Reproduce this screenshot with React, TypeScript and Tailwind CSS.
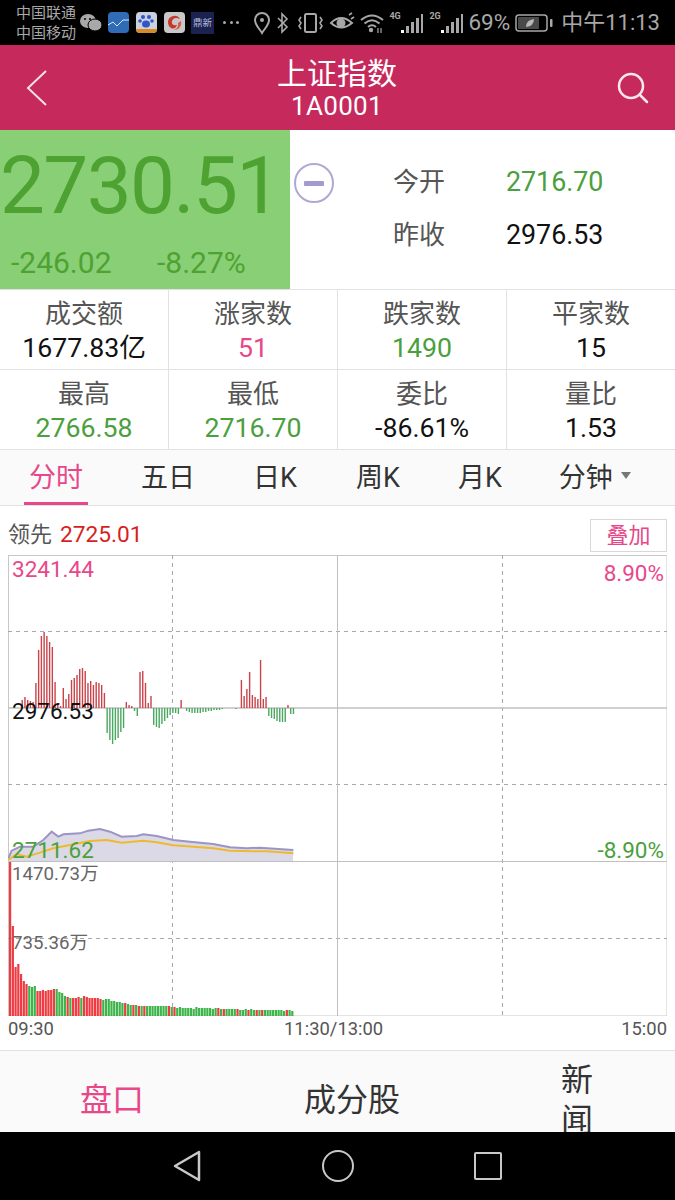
const font = { fontFamily: '"Roboto", "Noto Sans CJK SC", sans-serif' };

const priceBars = [
  8, 11, 8, 7, 6, 25, 58, 72, 76, 72, 66, 61, 26, 5, 2, 20, 9, 14, 28, 30, 33, 39, 40, 37, 25, 27, 23, 26, 25, 23, 15,
  -25, -32, -36, -32, -30, -24, -20, 6, 3, 2, -3, -8, 36, 37, 25, 5, 12, -17, -19, -20, -16, -13, -10, -7, -5, -5, -6, 8,
  0, -3, -4, -5, -5, -5, -5, -4, -4, -3, -3, -2, -2, -2, -1, 0, 0, 0, 0, -1, 0, 28, 12, 19, 36, 13, 11, 9, 48, 9, 11,
  -8, -10, -11, -13, -14, -14, -14, 3, -6, -6,
];

const volBars: [number, string][] = [
  [154, 'r'], [90, 'r'], [49, 'r'], [52, 'r'], [42, 'r'], [35, 'r'], [32, 'r'], [30, 'g'], [29, 'g'], [30, 'g'],
  [25, 'r'], [25, 'r'], [26, 'r'], [25, 'r'], [26, 'r'], [26, 'r'], [27, 'r'], [27, 'g'], [24, 'g'], [23, 'g'],
  [20, 'g'], [19, 'r'], [18, 'g'], [18, 'r'], [18, 'r'], [19, 'r'], [18, 'g'], [20, 'r'], [19, 'r'], [18, 'r'],
  [18, 'r'], [18, 'r'], [18, 'r'], [17, 'r'], [16, 'g'], [17, 'g'], [17, 'g'], [15, 'g'], [15, 'g'], [14, 'g'],
  [14, 'g'], [13, 'g'], [13, 'r'], [12, 'g'], [11, 'g'], [11, 'r'], [11, 'g'], [10, 'r'], [10, 'g'], [10, 'r'],
  [10, 'g'], [10, 'g'], [10, 'g'], [10, 'g'], [10, 'g'], [10, 'g'], [10, 'g'], [10, 'g'], [10, 'r'], [9, 'g'],
  [9, 'r'], [8, 'g'], [9, 'g'], [8, 'g'], [8, 'g'], [8, 'g'], [8, 'g'], [7, 'g'], [9, 'g'], [8, 'g'],
  [8, 'g'], [8, 'g'], [8, 'g'], [8, 'g'], [7, 'g'], [8, 'g'], [8, 'r'], [7, 'g'], [7, 'r'], [7, 'g'],
  [7, 'g'], [7, 'g'], [7, 'g'], [7, 'r'], [6, 'g'], [6, 'g'], [7, 'g'], [6, 'r'],
  [7, 'g'], [6, 'g'], [6, 'r'], [6, 'g'], [6, 'r'], [6, 'g'], [6, 'g'], [6, 'g'], [6, 'g'],
  [6, 'g'], [6, 'g'], [6, 'g'], [5, 'g'], [6, 'r'], [6, 'g'], [5, 'g'],
];

const purpleLine = [
  [25, 145], [35, 122], [60, 110], [100, 110], [130, 90], [155, 65], [175, 80], [190, 73], [240, 70], [265, 62],
  [300, 57], [330, 65], [365, 80], [410, 78], [430, 73], [470, 78], [520, 90], [570, 95], [640, 102], [690, 112],
  [740, 115], [780, 113], [880, 120],
];
const yellowLine = [
  [25, 150], [50, 132], [80, 140], [120, 128], [160, 115], [210, 105], [270, 93], [320, 90], [365, 98], [430, 92],
  [470, 97], [520, 106], [580, 110], [640, 115], [690, 122], [760, 124], [800, 124], [880, 130],
];

// points were read off a 3x crop starting at y=810; the svg starts at x=8, y=555
const toPoints = (line: number[][]) => line.map(([x, y]) => `${x / 3 - 8},${y / 3 + 255}`).join(' ');

function StatusIcons() {
  return (
    <div className="flex items-center text-[#a8a8a8]">
      <svg width="18" height="24" viewBox="0 0 18 24">
        <path
          d="M9 22 C6 17 2 14 2 9 A7 7 0 0 1 16 9 C16 14 12 17 9 22 Z"
          fill="none"
          stroke="#a8a8a8"
          strokeWidth="2"
        />
        <circle cx="9" cy="9" r="2" fill="#a8a8a8" />
      </svg>
      <svg width="14" height="24" viewBox="0 0 14 24" className="ml-[5px]">
        <path d="M2 7 L11 16 L6 21 V3 L11 8 L2 17" fill="none" stroke="#a8a8a8" strokeWidth="1.6" />
      </svg>
      <svg width="28" height="24" viewBox="0 0 28 24" className="ml-[7px]">
        <rect x="8" y="3" width="11" height="18" rx="1.5" fill="none" stroke="#a8a8a8" strokeWidth="2" />
        <path d="M4 6 L2 9 L4 12 L2 15 L4 18 M23 6 L25 9 L23 12 L25 15 L23 18" fill="none" stroke="#a8a8a8" strokeWidth="1.6" />
      </svg>
      <svg width="26" height="22" viewBox="0 0 26 22" className="ml-[4px]">
        <path d="M2 11 Q12 1 23 11 Q12 20 2 11 Z" fill="none" stroke="#a8a8a8" strokeWidth="2" />
        <circle cx="12" cy="11" r="4.5" fill="#a8a8a8" />
        <path d="M20 3 L23 1 M22 7 L25 5" stroke="#a8a8a8" strokeWidth="1.6" />
      </svg>
      <svg width="26" height="22" viewBox="0 0 26 22" className="ml-[4px]">
        <path d="M2 8 Q13 -1 24 8 M5.5 11.5 Q13 5 20.5 11.5 M9 15 Q13 11.5 17 15" fill="none" stroke="#a8a8a8" strokeWidth="2" />
        <circle cx="12" cy="18" r="2.2" fill="#a8a8a8" />
        <path d="M19 16 V21 M22 16 V21" stroke="#a8a8a8" strokeWidth="1.2" />
      </svg>
      <SignalIcon label="4G" className="ml-[4px]" />
      <SignalIcon label="2G" className="ml-[6px]" />
      <span className="ml-[5px] text-[22.5px] leading-none">69%</span>
      <svg width="38" height="20" viewBox="0 0 38 20" className="ml-[5px]">
        <rect x="1" y="2" width="31" height="16" rx="3" fill="none" stroke="#a8a8a8" strokeWidth="1.5" />
        <rect x="3" y="4" width="21" height="12" rx="1" fill="#4a4a4a" />
        <path d="M11 14 Q11 7 19 6 Q19 13 11 14 Z" fill="#b8b8b8" />
        <rect x="35" y="6" width="2.5" height="8" rx="1" fill="#a8a8a8" />
      </svg>
      <span className="ml-[8px] text-[22px] leading-none">中午11:13</span>
    </div>
  );
}

function SignalIcon({ label, className }: { label: string; className: string }) {
  return (
    <div className={`relative h-[24px] w-[34px] ${className}`}>
      <span className="absolute left-0 top-[1px] text-[9px] font-bold leading-none">{label}</span>
      <div className="absolute bottom-[2px] right-0 flex items-end gap-[2px]">
        <div className="h-[3px] w-[3px] bg-white" />
        <div className="h-[7px] w-[3px] bg-[#a8a8a8]" />
        <div className="h-[11px] w-[3px] bg-[#a8a8a8]" />
        <div className="h-[15px] w-[3px] bg-[#a8a8a8]" />
        <div className="h-[19px] w-[2px] bg-[#a8a8a8]" />
      </div>
    </div>
  );
}

function AppIcons() {
  return (
    <div className="flex items-center">
      <svg width="22" height="20" viewBox="0 0 22 20">
        <ellipse cx="8" cy="8" rx="8" ry="7" fill="#a8a8a8" />
        <ellipse cx="15" cy="12" rx="7" ry="6" fill="#a8a8a8" stroke="#000" strokeWidth="1" />
        <circle cx="5" cy="6" r="1" fill="#000" />
        <circle cx="10" cy="6" r="1" fill="#000" />
      </svg>
      <div className="ml-[6px] h-[21px] w-[21px] overflow-hidden rounded-[4px] bg-[#2f6cb5]">
        <svg width="21" height="21" viewBox="0 0 21 21">
          <path d="M0 13 L5 10 L9 14 L15 8 L21 8" fill="none" stroke="#d8e8f8" strokeWidth="1" />
        </svg>
      </div>
      <div className="ml-[7px] h-[21px] w-[21px] overflow-hidden rounded-[4px] bg-[#c9d2dc]">
        <svg width="21" height="21" viewBox="0 0 21 21">
          <circle cx="7" cy="5" r="2" fill="#3256c8" />
          <circle cx="13" cy="5" r="2" fill="#3256c8" />
          <circle cx="4" cy="9" r="1.8" fill="#3256c8" />
          <circle cx="16" cy="9" r="1.8" fill="#3256c8" />
          <ellipse cx="10" cy="12" rx="4" ry="3.5" fill="#3256c8" />
          <rect y="17" width="21" height="4" fill="#d98a24" />
        </svg>
      </div>
      <svg width="21" height="21" viewBox="0 0 21 21" className="ml-[7px]">
        <rect width="21" height="21" rx="4" fill="#c8c8c8" />
        <path d="M4 11 A6.5 6.5 0 0 1 16 7 Q10 4 8 9 Q7 14 13 13 Q11 18 7 16 Q4 14 4 11 Z" fill="#c9362e" />
        <path d="M17 9 A7 7 0 0 1 10 18 Q15 16 14 11 Z" fill="#d85a48" />
      </svg>
      <div className="ml-[6px] flex h-[22px] w-[23px] items-center justify-center bg-[#1b2250] text-[9.5px] leading-none text-[#b8bede]">
        鼎新
      </div>
      <div className="ml-[9px] flex w-[16px] justify-between">
        <div className="h-[3px] w-[3px] rounded-full bg-[#a8a8a8]" />
        <div className="h-[3px] w-[3px] rounded-full bg-[#a8a8a8]" />
        <div className="h-[3px] w-[3px] rounded-full bg-[#a8a8a8]" />
      </div>
    </div>
  );
}

function StatCell({ label, value, color, last }: { label: string; value: string; color: string; last?: boolean }) {
  return (
    <div className={`flex h-[80px] flex-col items-center border-b border-[#e2e2e2] pt-[8px] ${last ? '' : 'border-r'}`}>
      <div className="text-[26px] leading-[32px] text-[#555555]">{label}</div>
      <div className={`text-[26.7px] leading-[37px] ${color}`}>{value}</div>
    </div>
  );
}

function Chart() {
  return (
    <div className="relative mx-[8px] h-[461px] w-[659px]">
      <svg width="659" height="461" viewBox="0 0 659 461" className="block">
        <rect x="0.5" y="0.5" width="658.5" height="460.5" fill="none" stroke="#c8c8c8" />
        {[76.5, 229.5, 383.5].map((y) => (
          <line key={y} x1="0" x2="659" y1={y} y2={y} stroke="#a8a8a8" strokeDasharray="4 4" />
        ))}
        {[164.5, 494.5].map((x) => (
          <line key={x} x1={x} x2={x} y1="0" y2="461" stroke="#a8a8a8" strokeDasharray="4 4" />
        ))}
        <line x1="329.5" x2="329.5" y1="0" y2="461" stroke="#c0c0c0" />
        <line x1="0" x2="659" y1="153" y2="153" stroke="#c0c0c0" strokeWidth="1.5" />
        <line x1="0" x2="659" y1="306.5" y2="306.5" stroke="#c0c0c0" />

        {priceBars.map((h, i) =>
          h === 0 ? null : (
            <rect
              key={i}
              x={13.5 + i * 2.74}
              y={h > 0 ? 153 - h : 153}
              width="1.4"
              height={Math.abs(h)}
              fill={h > 0 ? '#c8434a' : '#4aa860'}
            />
          ),
        )}

        <polygon points={`${toPoints(purpleLine)} 285,306 0.5,306`} fill="#dcd9e6" />
        <polyline points={toPoints(purpleLine)} fill="none" stroke="#9c94c4" strokeWidth="2" />
        <polyline points={toPoints(yellowLine)} fill="none" stroke="#eeb92e" strokeWidth="2" />

        {volBars.map(([h, c], i) => (
          <rect
            key={i}
            x={1 + i * 2.74}
            y={461 - h}
            width="2.2"
            height={h}
            fill={c === 'r' ? '#ee3a40' : '#3cb44a'}
          />
        ))}
      </svg>

      <span className="absolute left-[4px] top-[1px] text-[22.5px] leading-[26px] text-[#e8488a]">3241.44</span>
      <span className="absolute right-[3px] top-[5px] text-[22.5px] leading-[26px] text-[#e8488a]">8.90%</span>
      <span className="absolute left-[4px] top-[143px] text-[22.5px] leading-[26px] text-[#111111]">2976.53</span>
      <span className="absolute left-[4px] top-[282px] text-[22.5px] leading-[26px] text-[#4aa03c]">2711.62</span>
      <span className="absolute right-[3px] top-[282px] text-[22.5px] leading-[26px] text-[#4aa03c]">-8.90%</span>
      <span className="absolute left-[4px] top-[306px] text-[18.7px] leading-[26px] text-[#666666]">1470.73万</span>
      <span className="absolute left-[4px] top-[375px] text-[18.7px] leading-[26px] text-[#666666]">735.36万</span>
    </div>
  );
}

export default function App() {
  return (
    <div className="h-[1200px] w-[675px] overflow-hidden bg-white" style={font}>
      {/* status bar */}
      <div className="flex h-[45px] items-center justify-between bg-black pl-[16px] pr-[15px]">
        <div className="flex items-center">
          <div className="text-[15px] leading-[20px] text-[#a8a8a8]">
            <div>中国联通</div>
            <div>中国移动</div>
          </div>
          <div className="ml-[4px]">
            <AppIcons />
          </div>
        </div>
        <StatusIcons />
      </div>

      {/* header */}
      <div className="flex h-[85px] items-center justify-between bg-[#c62a5c] pl-[26px] pr-[25px]">
        <svg width="22" height="38" viewBox="0 0 22 38">
          <path d="M20 2 L2 19 L20 36" fill="none" stroke="#f5e0e6" strokeWidth="2" />
        </svg>
        <div className="ml-[10px] text-center text-white">
          <div className="text-[30px] leading-[36px]">上证指数</div>
          <div className="text-[26px] leading-[28px] tracking-[0.3px]">1A0001</div>
        </div>
        <svg width="34" height="34" viewBox="0 0 34 34">
          <circle cx="15" cy="15" r="12" fill="none" stroke="#fbe8ee" strokeWidth="2.5" />
          <path d="M24 24 L31 31" stroke="#fbe8ee" strokeWidth="2.5" strokeLinecap="round" />
        </svg>
      </div>

      {/* quote */}
      <div className="flex h-[160px] border-b border-[#e2e2e2]">
        <div className="w-[290px] bg-[#89cf76] text-[#4ea232]">
          <div className="mt-[14px] text-[80px] leading-[84px] tracking-[-1.6px]">2730.51</div>
          <div className="mt-[18px] flex text-[30px] leading-[34px]">
            <span className="ml-[11px] w-[146px]">-246.02</span>
            <span>-8.27%</span>
          </div>
        </div>
        <div className="flex flex-1 items-start">
          <div className="ml-[4px] mt-[33px] flex h-[40px] w-[40px] items-center justify-center rounded-full border-2 border-[#b0a8d4]">
            <div className="h-[5px] w-[20px] rounded-[1px] bg-[#a39ad0]" />
          </div>
          <div className="ml-[59px] mt-[26px] grid grid-cols-[113px_auto] text-[26.8px] leading-[53px]">
            <span className="text-[26px] text-[#555555]">今开</span>
            <span className="text-[#4aa03c]">2716.70</span>
            <span className="text-[26px] text-[#555555]">昨收</span>
            <span className="text-[#111111]">2976.53</span>
          </div>
        </div>
      </div>

      {/* stats */}
      <div className="grid grid-cols-[169px_169px_169px_168px]">
        <StatCell label="成交额" value="1677.83亿" color="text-[#111111]" />
        <StatCell label="涨家数" value="51" color="text-[#e8488a]" />
        <StatCell label="跌家数" value="1490" color="text-[#4aa03c]" />
        <StatCell label="平家数" value="15" color="text-[#111111]" last />
        <StatCell label="最高" value="2766.58" color="text-[#4aa03c]" />
        <StatCell label="最低" value="2716.70" color="text-[#4aa03c]" />
        <StatCell label="委比" value="-86.61%" color="text-[#111111]" />
        <StatCell label="量比" value="1.53" color="text-[#111111]" last />
      </div>

      {/* tabs */}
      <div className="flex h-[56px] border-b border-[#e2e2e2] bg-[#fafafa] text-[27px] leading-[56px] text-[#333333]">
        <div className="relative ml-[24px] w-[64px] text-center text-[#e8488a]">
          分时
          <div className="absolute bottom-0 left-0 h-[3px] w-[64px] bg-[#e8488a]" />
        </div>
        <div className="ml-[53px]">五日</div>
        <div className="ml-[58px]">日K</div>
        <div className="ml-[59px]">周K</div>
        <div className="ml-[58px]">月K</div>
        <div className="ml-[57px] flex items-center">
          分钟
          <div className="mb-[4px] ml-[8px] h-0 w-0 border-x-[5px] border-t-[7px] border-x-transparent border-t-[#777777]" />
        </div>
      </div>

      {/* leader line */}
      <div className="flex h-[49px] items-center justify-between pl-[8px] pr-[8px] pt-[9px]">
        <div className="flex items-center text-[22px]">
          <span className="text-[#555555]">领先</span>
          <span className="ml-[8px] text-[22.7px] text-[#d81e1e]">2725.01</span>
        </div>
        <div className="flex h-[33px] w-[77px] items-center justify-center border border-[#d8d8d8] text-[22px] text-[#e8488a]">
          叠加
        </div>
      </div>

      <Chart />

      {/* time axis */}
      <div className="relative flex h-[34px] justify-between px-[8px] pt-[1px] text-[18.4px] leading-[24px] text-[#555555]">
        <span>09:30</span>
        <span className="absolute left-[284px]">11:30/13:00</span>
        <span>15:00</span>
      </div>

      {/* bottom tabs */}
      <div className="flex h-[82px] items-center overflow-hidden border-t border-[#e2e2e2] bg-[#fafafa] pt-[16px] text-[32px]">
        <span className="ml-[80px] text-[#e8488a]">盘口</span>
        <span className="ml-[160px] text-[#333333]">成分股</span>
        <span className="ml-[161px] w-[32px] text-center leading-[40px] text-[#333333]">新闻</span>
      </div>

      {/* nav bar */}
      <div className="flex h-[68px] items-center bg-black">
        <svg width="30" height="34" viewBox="0 0 30 34" className="ml-[172px]">
          <path d="M27 3 L3 17 L27 31 Z" fill="none" stroke="#c8c8c8" strokeWidth="2.5" strokeLinejoin="round" />
        </svg>
        <div className="ml-[120px] h-[32px] w-[32px] rounded-full border-[2.5px] border-[#c8c8c8]" />
        <div className="ml-[120px] h-[28px] w-[28px] rounded-[2px] border-[2.5px] border-[#c8c8c8]" />
      </div>
    </div>
  );
}
